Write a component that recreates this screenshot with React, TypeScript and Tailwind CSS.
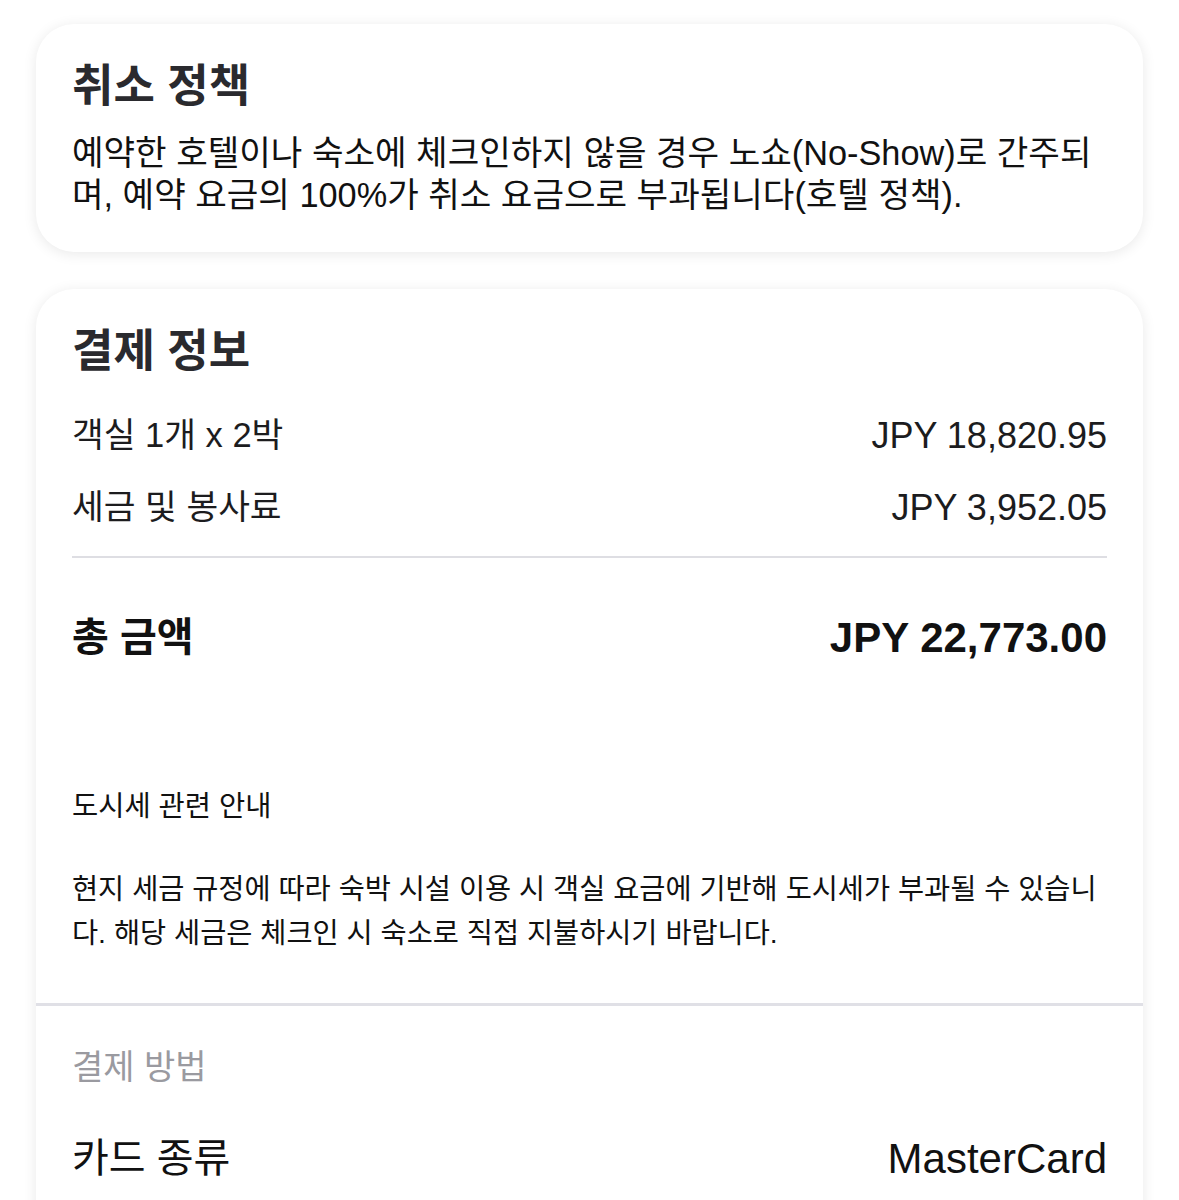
import React from 'react';

const rows = [
  { label: '객실 1개 x 2박', value: 'JPY 18,820.95' },
  { label: '세금 및 봉사료', value: 'JPY 3,952.05' },
];

const Card = ({ children, className = '' }: { children: React.ReactNode; className?: string }) => (
  <section
    className={`rounded-[38px] bg-white shadow-[0_2px_14px_rgba(0,0,0,0.09)] ${className}`}
  >
    {children}
  </section>
);

export default function App() {
  return (
    <div className="min-h-[1200px] bg-white px-[36px] pt-[24px] font-['Liberation_Sans','Noto_Sans_CJK_KR',sans-serif] text-[#111]">
      <Card className="px-[36px] pt-[39px] pb-[36px]">
        <h2 className="mb-[21px] text-[45px] font-bold leading-[48px] text-[#2a2a2e]">취소 정책</h2>
        <p className="text-[34.3px] leading-[42px]">
          예약한 호텔이나 숙소에 체크인하지 않을 경우 노쇼(No-Show)로 간주되며, 예약 요금의 100%가 취소 요금으로
          부과됩니다(호텔 정책).
        </p>
      </Card>

      <Card className="mt-[37px] overflow-hidden rounded-b-none">
        <div className="px-[36px] pt-[39px] pb-[48px]">
          <h2 className="mb-[24px] text-[45px] font-bold leading-[48px] text-[#2a2a2e]">결제 정보</h2>
          {rows.map((row) => (
            <div key={row.label} className="flex h-[72px] items-center justify-between text-[#1c1c1e]">
              <span className="text-[34.5px]">{row.label}</span>
              <span className="text-[36px]">{row.value}</span>
            </div>
          ))}
          <div className="mt-[12px] h-[2px] bg-[#dedee3]" />
          <div className="mt-[54px] flex h-[50px] items-center justify-between">
            <span className="text-[40px] font-bold">총 금액</span>
            <span className="text-[42px] font-bold">JPY 22,773.00</span>
          </div>

          <p className="mt-[126px] text-[28.5px] leading-[36px]">도시세 관련 안내</p>
          <p className="mt-[43px] text-[28.4px] leading-[44px]">
            현지 세금 규정에 따라 숙박 시설 이용 시 객실 요금에 기반해 도시세가 부과될 수 있습니다. 해당 세금은 체크인 시
            숙소로 직접 지불하시기 바랍니다.
          </p>
        </div>

        <div className="h-[3px] bg-[#e0e0e6]" />

        <div className="px-[36px] pt-[41px] pb-[40px]">
          <p className="text-[34px] leading-[40px] text-[#9a9aa0]">결제 방법</p>
          <div className="mt-[47px] flex h-[48px] items-center justify-between">
            <span className="text-[40px]">카드 종류</span>
            <span className="text-[42px]">MasterCard</span>
          </div>
        </div>
      </Card>
    </div>
  );
}
